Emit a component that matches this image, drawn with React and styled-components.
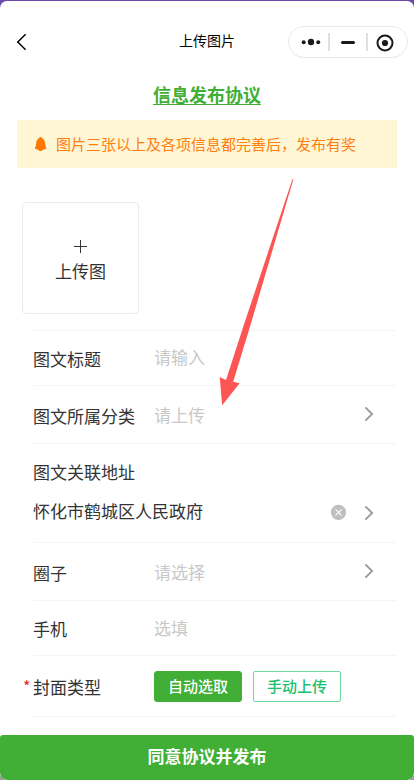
import styled, { createGlobalStyle } from 'styled-components';

const GlobalStyle = createGlobalStyle`
    * {
        box-sizing: border-box;
    }

    body {
        margin: 0;
        background: #6b47b0;
        font-family: "Noto Sans CJK SC", sans-serif;
        color: #333;
    }
`;

const Screen = styled.div`
    height: 780px;
    padding-top: 1px;
    overflow: hidden;
    background: linear-gradient(180deg, #6c4aab 0, #6c3fb8 40px, #9a9a9a 60px);
`;

const Page = styled.div`
    position: relative;
    display: flex;
    flex-direction: column;
    height: 779px;
    border-radius: 7px;
    overflow: hidden;
    background: #fff;
`;

const NavBar = styled.header`
    display: grid;
    grid-template-columns: 1fr auto 1fr;
    align-items: center;
    height: 82px;
    padding: 0 6px 0 16px;
`;

const NavTitle = styled.h1`
    margin: 0 10px 4px 0;
    font-size: 14px;
    font-weight: 400;
    line-height: 20px;
    color: #000;
`;

const BackIcon = styled.svg`
    display: block;
    width: 12px;
    height: 18px;
`;

const Capsule = styled.svg`
    display: block;
    justify-self: end;
    width: 120px;
    height: 32px;
    margin-left: -10px;
`;

const Agreement = styled.a`
    align-self: center;
    height: 38px;
    margin-top: -1px;
    font-size: 18px;
    font-weight: 700;
    line-height: 24px;
    color: #41ae36;
    text-decoration: underline;
    text-decoration-thickness: 1px;
    text-underline-offset: 2px;
`;

const Notice = styled.div`
    display: flex;
    align-items: center;
    gap: 9px;
    height: 48px;
    margin: 0 17px;
    padding: 0 18px 1px;
    background: #fff6d5;
    color: #ff7f0e;
    font-size: 15px;
    white-space: nowrap;
`;

const BellIcon = styled.svg`
    display: block;
    width: 12px;
    height: 14px;
    margin-top: 1px;
`;

const Uploader = styled.button`
    display: flex;
    flex-direction: column;
    align-items: center;
    flex: none;
    width: 117px;
    height: 112px;
    margin: 34px 0 16px 22px;
    padding: 37px 0 0;
    border: 1px solid #ebebeb;
    border-radius: 4px;
    background: #fff;
    color: #333;
    font: 17px/24px "Noto Sans CJK SC", sans-serif;
`;

const PlusIcon = styled.svg`
    display: block;
    width: 13px;
    height: 13px;
    margin-bottom: 6px;
`;

const Form = styled.div`
    margin: 0 18px 0 33px;
    border-top: 1px solid #f4f4f4;
`;

const Row = styled.div`
    display: flex;
    align-items: center;
    height: ${(p) => p.$height}px;
    padding-right: 22px;
    border-bottom: 1px solid #f4f4f4;
    font-size: 17px;
    line-height: 24px;
`;

const AddressRow = styled(Row)`
    flex-direction: column;
    align-items: stretch;
    padding-top: 16px;
`;

const AddressLine = styled.div`
    display: flex;
    align-items: center;
    margin-top: 15px;
`;

const Address = styled.span`
    flex: 1;
`;

const Label = styled.label`
    flex: none;
    width: 121px;
    padding-top: ${(p) => p.$drop ?? 2}px;
`;

const Required = styled.span`
    width: 10px;
    margin: -1px 0 0 -10px;
    color: #f02020;
    font-size: 16px;
`;

const Placeholder = styled.span`
    flex: 1;
    margin-top: ${(p) => (p.$raised ? -2 : 0)}px;
    color: #c8c8c8;
`;

const Chevron = styled.svg`
    display: block;
    width: 10px;
    height: 16px;
    margin-top: ${(p) => p.$shift ?? -1}px;
`;

const ClearIcon = styled.svg`
    display: block;
    width: 16px;
    height: 16px;
    margin: 2px 18px 0 0;
`;

const Choice = styled.button`
    width: 88px;
    height: 31px;
    margin-right: 11px;
    padding: 0 0 1px;
    border: 1px solid ${(p) => (p.$active ? '#41ae36' : '#72d9a3')};
    border-radius: ${(p) => (p.$active ? 3 : 2)}px;
    background: ${(p) => (p.$active ? '#41ae36' : '#fff')};
    color: ${(p) => (p.$active ? '#fff' : '#18c06c')};
    font: 500 15px/22px "Noto Sans CJK SC", sans-serif;
    white-space: nowrap;
`;

const Submit = styled.button`
    height: 45px;
    margin-top: auto;
    padding: 0 0 3px;
    border: 0;
    border-radius: 3px 3px 7px 7px;
    background: #41ae36;
    color: #fff;
    font: 700 17px/24px "Noto Sans CJK SC", sans-serif;
`;

// Red pointer laid over the form
const Pointer = styled.svg`
    position: absolute;
    left: 215px;
    top: 177px;
    width: 82px;
    height: 230px;
    pointer-events: none;
`;

const Arrow = ({ shift }) => (
    <Chevron viewBox="0 0 10 16" $shift={shift}>
        <path d="M1.4 1.3L8.1 8L1.4 14.7" fill="none" stroke="#999" strokeWidth="1.8" />
    </Chevron>
);

const App = () => (
    <>
        <GlobalStyle />
        <Screen>
            <Page>
                <NavBar>
                    <BackIcon viewBox="0 0 12 18">
                        <path d="M9.6 1.2L1.8 9L9.6 16.8" fill="none" stroke="#000" strokeWidth="1.5" />
                    </BackIcon>
                    <NavTitle>上传图片</NavTitle>
                    <Capsule viewBox="0 0 120 32">
                        <rect x="0.5" y="0.5" width="119" height="31" rx="15.5" fill="#fff" stroke="#e8e8e8" />
                        <path d="M41 7V25M79 7V25" stroke="#d8d8d8" strokeWidth="1.6" />
                        <g fill="#1a1a1a">
                            <circle cx="15.7" cy="16.3" r="2" />
                            <circle cx="23" cy="16" r="3.2" />
                            <circle cx="30.2" cy="16.3" r="2" />
                            <rect x="53" y="15" width="14" height="3" rx="1.5" />
                            <circle cx="97" cy="17" r="3.1" />
                        </g>
                        <circle cx="97" cy="17" r="7.5" fill="none" stroke="#1a1a1a" strokeWidth="2" />
                    </Capsule>
                </NavBar>

                <Agreement>信息发布协议</Agreement>
                <Notice>
                    <BellIcon viewBox="0 0 12 14">
                        <path d="M5.5 0C6.3 0 6.5.7 7.3 1.2C9.2 2.2 9.8 4 10 6C10.2 8.1 10.5 9.4 11.2 10.4C11.6 11.1 11.4 11.7 10.7 11.9L8.6 12.4C7.5 13.2 6.6 13.9 5.5 13.9C4.4 13.9 3.5 13.2 2.4 12.4L.5 11.9C-.1 11.7-.2 11.1.1 10.4C.8 9.4 1 8.1 1.2 6C1.4 4 2 2.2 3.7 1.2C4.5.7 4.7 0 5.5 0Z" fill="#ff7900" />
                    </BellIcon>
                    图片三张以上及各项信息都完善后，发布有奖
                </Notice>

                <Uploader type="button">
                    <PlusIcon viewBox="0 0 13 13">
                        <path d="M6.5 0V13M0 6.5H13" stroke="#333" />
                    </PlusIcon>
                    上传图
                </Uploader>

                <Form>
                    <Row $height={55}>
                        <Label>图文标题</Label>
                        <Placeholder $raised>请输入</Placeholder>
                    </Row>
                    <Row $height={58}>
                        <Label>图文所属分类</Label>
                        <Placeholder>请上传</Placeholder>
                        <Arrow />
                    </Row>
                    <AddressRow $height={99}>
                        <Label $drop={0}>图文关联地址</Label>
                        <AddressLine>
                            <Address>怀化市鹤城区人民政府</Address>
                            <ClearIcon viewBox="0 0 16 16">
                                <circle cx="8.5" cy="8.3" r="7.6" fill="#bfbfbf" />
                                <path d="M5.5 5.3L11.5 11.3M11.5 5.3L5.5 11.3" stroke="#fff" strokeWidth="1.1" />
                            </ClearIcon>
                            <Arrow shift={3} />
                        </AddressLine>
                    </AddressRow>
                    <Row $height={58}>
                        <Label>圈子</Label>
                        <Placeholder>请选择</Placeholder>
                        <Arrow />
                    </Row>
                    <Row $height={55}>
                        <Label>手机</Label>
                        <Placeholder>选填</Placeholder>
                    </Row>
                    <Row $height={61}>
                        <Required>*</Required>
                        <Label>封面类型</Label>
                        <Choice type="button" $active>自动选取</Choice>
                        <Choice type="button">手动上传</Choice>
                    </Row>
                </Form>

                <Submit type="button">同意协议并发布</Submit>

                <Pointer viewBox="0 0 82 230">
                    <path d="M78.4 1.2L35.5 147L18.2 203.7L24.6 205.3L7.2 227.2L4.7 199L11 202L28.8 147L77.4 1.2Z" fill="#fd5454" />
                </Pointer>
            </Page>
        </Screen>
    </>
);

export default App;
